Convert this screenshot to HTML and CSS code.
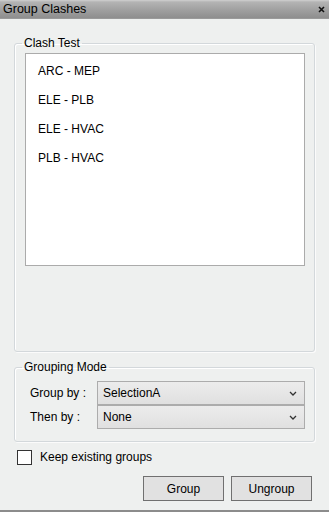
FILE: index.html
```html
<!DOCTYPE html>
<html>
<head>
<meta charset="utf-8">
<link rel="stylesheet" href="styles.css">
</head>
<body>
<div class="window">
  <div class="titlebar">
    <span class="title">Group Clashes</span>
    <svg class="close" width="7" height="7" viewBox="0 0 7 7"><path d="M1 1L6 6M6 1L1 6" stroke="#111" stroke-width="1.6"/></svg>
  </div>
  <div class="content">
    <fieldset class="group clash">
      <legend>Clash Test</legend>
      <ul class="list">
        <li>ARC - MEP</li>
        <li>ELE - PLB</li>
        <li>ELE - HVAC</li>
        <li>PLB - HVAC</li>
      </ul>
    </fieldset>
    <fieldset class="group mode">
      <legend>Grouping Mode</legend>
      <div class="row">
        <span class="lbl">Group by :</span>
        <div class="select"><span>SelectionA</span><svg width="8" height="5" viewBox="0 0 8 5"><path d="M1 1L4 4L7 1" fill="none" stroke="#333" stroke-width="1.3"/></svg></div>
      </div>
      <div class="row">
        <span class="lbl">Then by :</span>
        <div class="select"><span>None</span><svg width="8" height="5" viewBox="0 0 8 5"><path d="M1 1L4 4L7 1" fill="none" stroke="#333" stroke-width="1.3"/></svg></div>
      </div>
    </fieldset>
    <div class="check"><span class="box"></span><span>Keep existing groups</span></div>
    <div class="buttons">
      <button class="btn">Group</button>
      <button class="btn">Ungroup</button>
    </div>
  </div>
</div>
</body>
</html>
```
FILE: styles.css
```css
html, body {
  margin: 0;
  padding: 0;
}
body {
  background: #eef0ef;
  font-family: "Liberation Sans", Arial, sans-serif;
  font-size: 12px;
  color: #000;
}
.window {
  width: 329px;
  height: 512px;
  box-sizing: border-box;
  border-bottom: 2px solid #8c8c8c;
  display: flex;
  flex-direction: column;
}
.titlebar {
  height: 18px;
  flex: none;
  display: flex;
  align-items: center;
  justify-content: space-between;
  padding: 0 4px 0 3px;
  background: linear-gradient(#d0d0d0 0, #b4b4b4 2px, #a2a2a2 9px, #8e8e8e 100%);
  border-bottom: 1px solid #9a9a9a;
}
.title {
  font-size: 12.5px;
  color: #000;
  line-height: 18px;
}
.close {
  display: block;
}
.content {
  flex: 1;
  display: flex;
  flex-direction: column;
}
.group {
  margin: 0 0 0 14px;
  width: 301px;
  box-sizing: border-box;
  border: 1px solid #d3d8db;
  border-radius: 3px;
  box-shadow: inset 1px 1px 0 #fff, 1px 1px 0 #fbfbfb;
  padding: 0 9px 0 10px;
}
.group legend {
  padding: 0 2px;
  margin-left: -3px;
  line-height: 14px;
  font-size: 12px;
}
.clash {
  margin-top: 17px;
  padding-bottom: 85px;
}
.list {
  list-style: none;
  margin: 3px 0 0 0;
  padding: 3px 0 0 12px;
  height: 213px;
  box-sizing: border-box;
  background: #fff;
  border: 1px solid #ababab;
}
.list li {
  line-height: 29px;
  height: 29px;
}
.mode {
  margin-top: 8px;
  padding-top: 7px;
  padding-bottom: 12px;
}
.row {
  display: flex;
  align-items: center;
  margin-bottom: 0;
}
.lbl {
  width: 72px;
  padding-left: 5px;
  box-sizing: border-box;
}
.select {
  flex: 1;
  height: 24px;
  box-sizing: border-box;
  border: 1px solid #acacac;
  background: linear-gradient(#ececec, #e0e0e0);
  display: flex;
  align-items: center;
  justify-content: space-between;
  padding: 0 7px 0 5px;
}
.select svg {
  display: block;
}
.check {
  display: flex;
  align-items: center;
  margin: 7px 0 0 17px;
  height: 16px;
}
.box {
  width: 13px;
  height: 13px;
  border: 1px solid #333;
  background: #fff;
  margin-right: 8px;
}
.buttons {
  display: flex;
  justify-content: flex-end;
  gap: 7px;
  margin: 11px 17px 0 0;
}
.btn {
  width: 81px;
  height: 25px;
  border: 1px solid #707070;
  background: #e1e1e1;
  font-family: "Liberation Sans", Arial, sans-serif;
  font-size: 12px;
  color: #000;
  padding: 0;
}
```
